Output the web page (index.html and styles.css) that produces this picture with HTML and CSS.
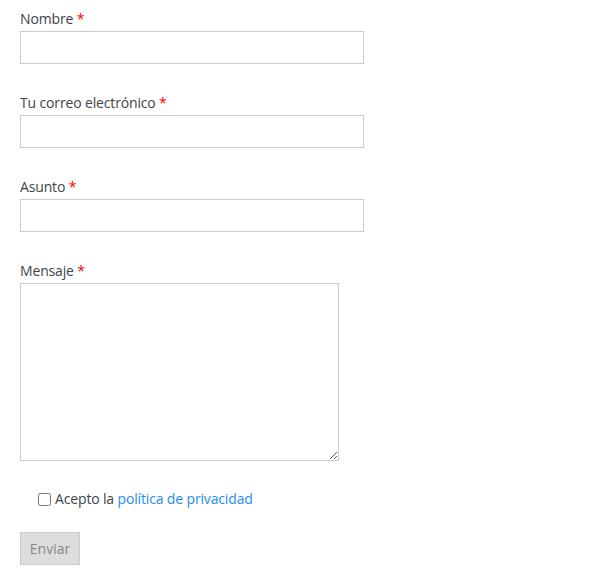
FILE: index.html
```html
<!DOCTYPE html>
<html lang="es">
<head>
<meta charset="utf-8">
<title>Contacto</title>
<link rel="stylesheet" href="styles.css">
</head>
<body>
<form class="form">
  <div class="field">
    <label class="label" for="n">Nombre <span class="req">*</span></label>
    <input class="input" id="n" type="text">
  </div>
  <div class="field">
    <label class="label" for="e">Tu correo electrónico <span class="req">*</span></label>
    <input class="input" id="e" type="email">
  </div>
  <div class="field">
    <label class="label" for="a">Asunto <span class="req">*</span></label>
    <input class="input" id="a" type="text">
  </div>
  <div class="field">
    <label class="label" for="m">Mensaje <span class="req">*</span></label>
    <textarea class="textarea" id="m"></textarea>
  </div>
  <div class="accept">
    <input class="check" type="checkbox" id="c">
    <label for="c">Acepto la <a class="link" href="#">política de privacidad</a></label>
  </div>
  <button class="btn" type="button">Enviar</button>
</form>
</body>
</html>
```
FILE: styles.css
```css
html, body {
  margin: 0;
  padding: 0;
  background: #fff;
}
body {
  font-family: "Open Sans", "Noto Sans", sans-serif;
  font-size: 14px;
  line-height: 20px;
  letter-spacing: -0.15px;
  color: #404448;
}
.form {
  padding: 9px 20px 0;
}
.field {
  margin-bottom: 29px;
}
.label {
  display: block;
  margin-bottom: 2px;
}
.req {
  color: #f00;
}
.input {
  display: block;
  box-sizing: border-box;
  width: 344px;
  height: 33px;
  margin: 0;
  border: 1px solid #ccc;
  background: #fff;
  padding: 4px 6px;
  font: inherit;
}
.textarea {
  display: block;
  box-sizing: border-box;
  width: 319px;
  height: 178px;
  margin: 0;
  border: 1px solid #ccc;
  background: #fff;
  padding: 4px 6px;
  font: inherit;
}
.field:nth-child(4) {
  margin-bottom: 28px;
}
.accept {
  display: flex;
  align-items: center;
  gap: 4px;
  padding-left: 18px;
  height: 20px;
  margin-bottom: 23px;
}
.check {
  margin: 0;
  width: 13px;
  height: 13px;
}
.link {
  color: #1e8cf0;
  text-decoration: none;
}
.btn {
  box-sizing: border-box;
  width: 60px;
  height: 33px;
  padding: 0;
  border: 1px solid #ccc;
  background: #ddd;
  color: #888;
  font: inherit;
}
```
